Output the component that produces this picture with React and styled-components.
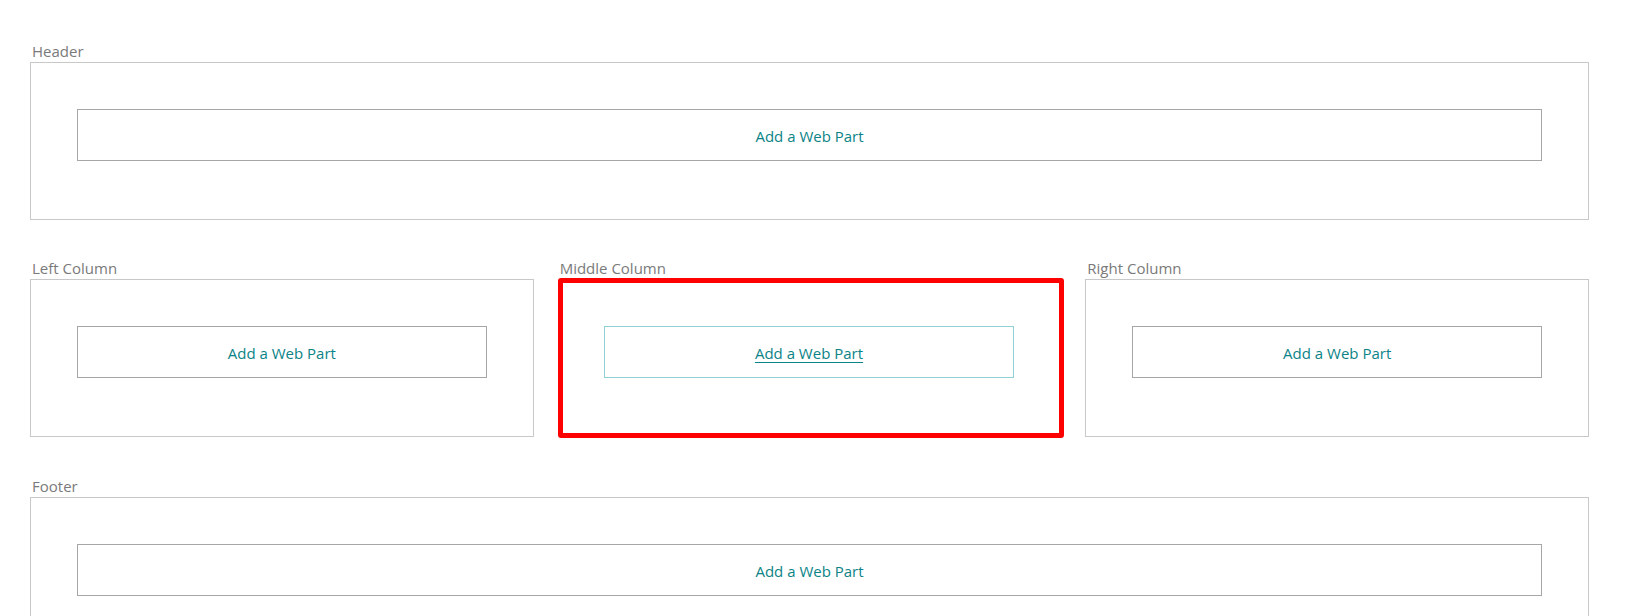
import React from "react";
import styled, { createGlobalStyle } from "styled-components";

const Global = createGlobalStyle`
  html, body { margin: 0; padding: 0; background: #ffffff; }
  body { font-family: "Open Sans", "Noto Sans", sans-serif; }
`;

const Page = styled.div`
  padding: 42px 39px 0 30px;
  display: flex;
  flex-direction: column;
  gap: 39px;
`;

const Row = styled.div`
  display: grid;
  grid-template-columns: repeat(${(p) => p.$cols}, 1fr);
  column-gap: 24px;
  margin-top: ${(p) => p.$extra || 0}px;
`;

const Zone = styled.section`
  display: flex;
  flex-direction: column;
  min-width: 0;
`;

const Label = styled.div`
  font-size: 15px;
  line-height: 18px;
  height: 20px;
  color: #7a7a7a;
  padding-left: 2px;
  white-space: nowrap;
`;

const Box = styled.div`
  border: ${(p) => (p.$active ? "5px solid #ff0000" : "1px solid #c8c8c8")};
  border-radius: ${(p) => (p.$active ? "3px" : "0")};
  margin: ${(p) => (p.$active ? "-1px -3px -1px 0" : "0")};
  padding: ${(p) => (p.$active ? "43px 45px 55px 41px" : "46px 46px 58px")};
`;

const AddButton = styled.button`
  display: flex;
  align-items: center;
  justify-content: center;
  width: 100%;
  height: 52px;
  box-sizing: border-box;
  background: #ffffff;
  border: 1px solid ${(p) => (p.$active ? "#8fd0d5" : "#a6a6a6")};
  font-family: "Open Sans", "Noto Sans", sans-serif;
  font-size: 15px;
  line-height: 20px;
  color: #0b8387;
  text-decoration: ${(p) => (p.$active ? "underline" : "none")};
  text-underline-offset: 3px;
  cursor: pointer;
  padding: 1px 0 0;
`;

function WebPartZone({ title, active }) {
  return (
    <Zone>
      <Label>{title}</Label>
      <Box $active={active}>
        <AddButton $active={active}>Add a Web Part</AddButton>
      </Box>
    </Zone>
  );
}

export default function App() {
  return (
    <>
      <Global />
      <Page>
        <Row $cols={1}>
          <WebPartZone title="Header" />
        </Row>
        <Row $cols={3}>
          <WebPartZone title="Left Column" />
          <WebPartZone title="Middle Column" active />
          <WebPartZone title="Right Column" />
        </Row>
        <Row $cols={1} $extra={1}>
          <WebPartZone title="Footer" />
        </Row>
      </Page>
    </>
  );
}
